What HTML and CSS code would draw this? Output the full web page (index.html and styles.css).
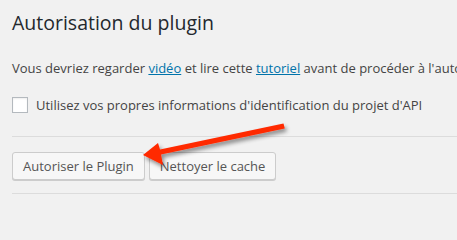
FILE: index.html
```html
<!DOCTYPE html>
<html lang="fr">
<head>
<meta charset="utf-8">
<link rel="stylesheet" href="styles.css">
</head>
<body>
<div class="wrap">
  <h2 class="title">Autorisation du plugin</h2>
  <p class="intro">Vous devriez regarder <a href="#">vidéo</a> et lire cette <a href="#">tutoriel</a> avant de procéder à l'autorisation du plugin.</p>
  <label class="check-row"><span class="checkbox"></span><span>Utilisez vos propres informations d'identification du projet d'API</span></label>
  <div class="sep"></div>
  <div class="actions">
    <button class="button">Autoriser le Plugin</button>
    <button class="button">Nettoyer le cache</button>
  </div>
  <div class="sep"></div>
</div>
<svg class="arrow" width="457" height="205" viewBox="0 0 457 205">
  <defs>
    <filter id="sh" x="-20%" y="-50%" width="140%" height="200%">
      <feGaussianBlur in="SourceAlpha" stdDeviation="2"/>
      <feOffset dx="2" dy="3" result="b"/>
      <feComponentTransfer><feFuncA type="linear" slope="0.45"/></feComponentTransfer>
      <feMerge><feMergeNode/><feMergeNode in="SourceGraphic"/></feMerge>
    </filter>
  </defs>
  <g filter="url(#sh)" fill="#ff2a00">
    <path d="M283.5 123.5 L284.8 128.5 L161 154.5 L163 165 L143 155 L158 143 L160 149.5 Z"/>
  </g>
</svg>
</body>
</html>
```
FILE: styles.css
```css
html, body {
  margin: 0;
  padding: 0;
  background: #f1f1f1;
  width: 457px;
  height: 205px;
  overflow: hidden;
}
body {
  font-family: "Open Sans", "Liberation Sans", sans-serif;
  font-size: 13px;
  color: #444;
  position: relative;
}
.wrap {
  padding: 0 0 0 12px;
  white-space: nowrap;
  overflow: hidden;
}
.title {
  font-size: 19.5px;
  font-weight: 400;
  color: #23282d;
  line-height: 26px;
  margin: 0;
  padding: 10px 0 0;
}
.intro {
  margin: 0;
  padding-top: 22px;
  font-size: 13px;
  line-height: 20px;
}
.intro a {
  color: #0073aa;
  text-decoration: underline;
}
.check-row {
  display: flex;
  align-items: center;
  gap: 8px;
  margin-top: 17px;
  line-height: 20px;
}
.checkbox {
  width: 14px;
  height: 14px;
  border: 1px solid #b4b9be;
  background: #fff;
  box-shadow: inset 0 1px 2px rgba(0,0,0,.07);
  flex: none;
}
.sep {
  border-top: 1px solid #dcdcdc;
  height: 0;
}
.check-row + .sep {
  margin-top: 21px;
}
.actions {
  display: flex;
  gap: 4px;
  padding: 15px 0 13px;
}
.button {
  font-family: inherit;
  font-size: 13px;
  color: #555;
  background: #f7f7f7;
  border: 1px solid #ccc;
  border-radius: 3px;
  box-shadow: 0 1px 0 #ccc;
  height: 28px;
  line-height: 26px;
  padding: 0 10px 1px;
  margin: 0;
}
.arrow {
  position: absolute;
  left: 0;
  top: 0;
}
```
